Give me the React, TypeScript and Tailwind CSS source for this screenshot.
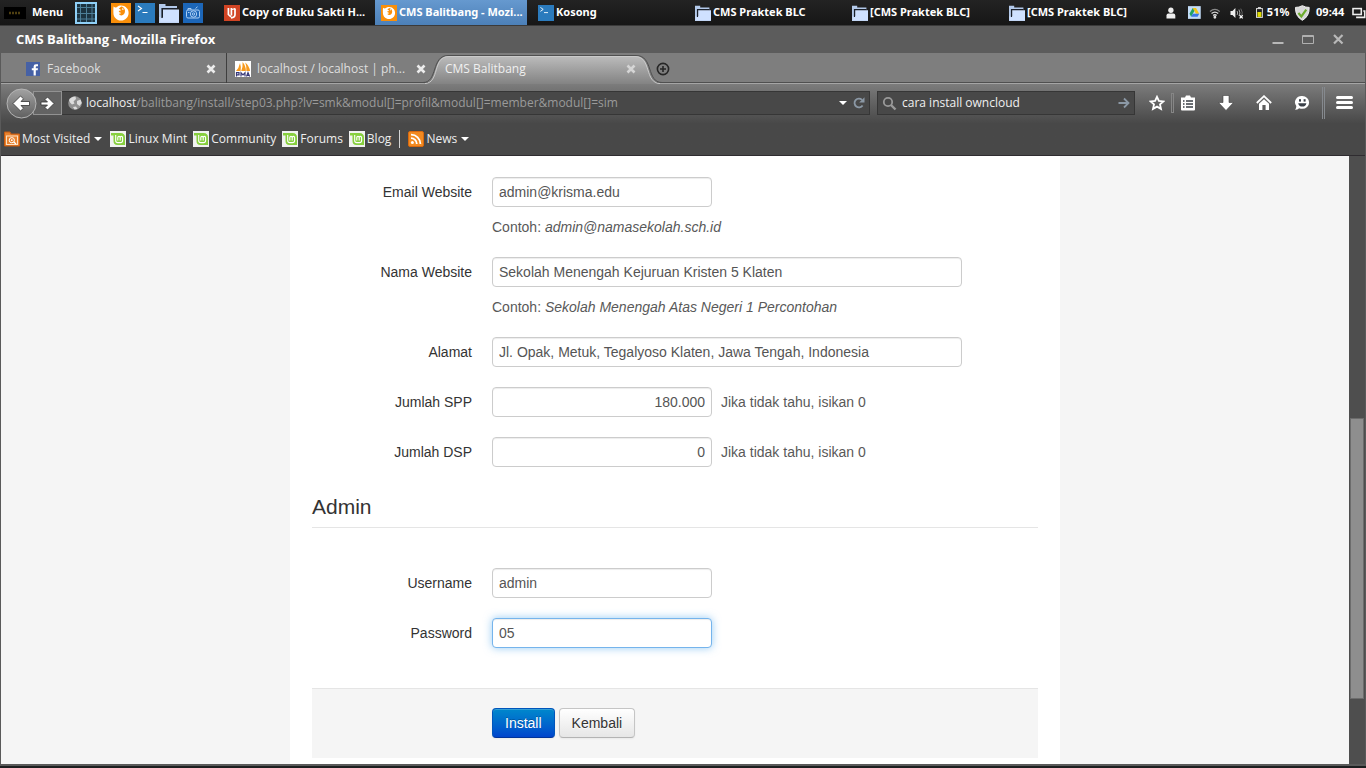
import { useState } from 'react'
import type { ReactNode } from 'react'

/* ---------- small icons ---------- */

function FirefoxIcon({ className }: { className: string }) {
  return (
    <svg className={className} viewBox="0 0 20 20">
      <rect width="20" height="20" fill="#f98f0a" />
      <path d="M2.6 3.4 C3.6 4.4 4.6 4.6 5.6 4.2 C7 2.8 8.6 2.4 10 2.4 C13 2.6 14.6 3.4 15.6 5 C16.6 5.6 17.6 7.6 17.6 10 C17.6 14.2 14.2 17.6 10 17.6 C5.8 17.6 2.4 14.2 2.4 10 C2.4 7.4 2.2 5.4 2.6 3.4 Z" fill="#fff" />
      <path d="M10.4 3.6 C12.6 4.2 13.8 5.6 14 7.8 C14.2 10.6 12.4 12.6 10 12.4 C8.6 12.2 8.2 11.4 8 10.8 C9 11 9.6 10.6 10.2 10 L8.4 9.2 C7.6 8.8 7.6 8 8.4 7.8 L10 7.4 C9.6 6.4 8.8 6 7.8 6 C8.6 5 9.4 4.2 10.4 3.6 Z" fill="#f98f0a" />
      <path d="M10.8 6.4 L12 4.6 L12.6 7 Z" fill="#fff" />
    </svg>
  )
}

function TerminalIcon({ className }: { className: string }) {
  return (
    <svg className={className} viewBox="0 0 20 20" fill="none">
      <rect width="20" height="20" fill="#2b7bbd" />
      <path d="M3 3 L6.5 5.5 L3 8 M7.5 9.5 H12.5" stroke="#fff" strokeWidth="1.1" />
    </svg>
  )
}

function FolderIcon({ className }: { className: string }) {
  return (
    <svg className={className} viewBox="0 0 20 20">
      <path d="M0 1 H6.5 V3 H18 V6 H3 V20 H0 Z" fill="#b3c9ea" />
      <path d="M0 14 H20 V20 H0 Z" fill="#c2d6f5" />
      <path d="M2.4 5 H18 V6.4 H3.8 V15 H2.4 Z" fill="#1a202a" />
      <path d="M4 6.6 H20 V18.8 H1.2 V15.4 H4 Z" fill="#cfe1ff" />
    </svg>
  )
}

function CameraIcon() {
  return (
    <svg className="size-5" viewBox="0 0 20 20" fill="none" stroke="#a9cdf3">
      <rect width="20" height="20" fill="#1c66b8" stroke="none" />
      <rect x="3.5" y="7" width="13" height="8" rx="1.5" />
      <circle cx="10.5" cy="11" r="3.2" />
      <circle cx="10.5" cy="11" r="1.2" />
      <path d="M5 7 V5.5 H8 V7 M12.5 5.5 L14.5 3.8 M5 9.5 H6.5" />
    </svg>
  )
}

function WorkspaceIcon() {
  return (
    <svg className="size-[22px]" viewBox="0 0 22 22">
      <rect width="22" height="22" fill="#8fd0f7" />
      <rect x="2" y="2" width="18" height="18" fill="#1c3340" />
      <path d="M5.5 2 V20 M11.5 2 V20 M17 2 V20 M2 5.5 H20 M2 11.5 H20 M2 17 H20" stroke="#4d7f98" />
    </svg>
  )
}

function PdfIcon() {
  return (
    <svg className="size-4" viewBox="0 0 16 16" fill="none">
      <rect width="16" height="16" fill="#d14424" />
      <path d="M4.4 3 V9.5 L7 12 M7.4 3 V10.5 M11 3.5 V9.5 Q11 12.5 7 12.8" stroke="#fff" strokeWidth="1.7" />
      <path d="M8 4.5 L11 3.6" stroke="#fff" strokeWidth="1.2" />
    </svg>
  )
}

function MintIcon() {
  return (
    <svg className="size-4" viewBox="0 0 16 16" fill="none">
      <rect width="16" height="16" fill="#f1f1f1" />
      <path d="M1 2 H10.5 Q15 2 15 6.5 V14 H7.5 Q3.5 14 3.5 10 V4.5 H1 Z" fill="#87cf3e" />
      <path d="M5.7 4 V9.5 Q5.7 11.6 7.8 11.6 H10.5 Q12.6 11.6 12.6 9.5 V6.5 Q12.6 5.4 11.4 5.4 Q10.2 5.4 10.2 6.5 V9.5 M10.2 6.5 Q10.2 5.4 9 5.4 Q7.8 5.4 7.8 6.5 V9.5" stroke="#fff" strokeWidth="1.1" />
    </svg>
  )
}

function MostVisitedIcon() {
  return (
    <svg className="size-4" viewBox="0 0 16 16" fill="none">
      <path d="M0.5 1 H6 L7 3 H15.5 V15 H0.5 Z" fill="#e8822e" stroke="#c65a10" />
      <rect x="2.5" y="5" width="11" height="8.5" stroke="#fbe0c4" />
      <circle cx="7.8" cy="9.2" r="2.6" stroke="#fff" />
      <circle cx="7.8" cy="9.2" r="0.9" fill="#fff" />
      <path d="M9.8 11 L12 13" stroke="#fff" strokeWidth="1.3" />
    </svg>
  )
}

function RssIcon() {
  return (
    <svg className="size-4" viewBox="0 0 16 16" fill="none">
      <rect x="0.5" y="0.5" width="15" height="15" rx="1.5" fill="#f28a21" stroke="#d9690f" />
      <circle cx="4.4" cy="11.6" r="1.5" fill="#fff" />
      <path d="M3 7.2 A5.8 5.8 0 0 1 8.8 13 M3 3.6 A9.4 9.4 0 0 1 12.4 13" stroke="#fff" strokeWidth="1.8" />
    </svg>
  )
}

function FacebookIcon() {
  return (
    <svg className="size-[14px]" viewBox="0 0 14 14">
      <rect width="14" height="14" fill="#4661a5" />
      <path d="M7.6 13.4 V8.2 H5.8 V6.2 H7.6 V4.6 Q7.6 2.2 10 2.2 H12 V4.2 H10.6 Q9.8 4.2 9.8 5 V6.2 H12 L11.7 8.2 H9.8 V13.4 Z" fill="#fff" />
    </svg>
  )
}

function PmaIcon() {
  return (
    <svg className="size-4" viewBox="0 0 16 16">
      <rect width="16" height="16" fill="#fff" />
      <path d="M1 10 Q4 7 5 2 Q6.2 5 5.6 10 Z M6.2 10 Q8 6 7.6 1 Q11 5 10.8 10 Z M11.4 10 Q11.8 5 10.2 1.5 Q14.4 5 15 10 Z" fill="#f79a1e" />
      <path d="M1.5 15.5 V11.6 H4 V13.8 H1.5 M6 15.5 V11.8 L8 13.8 L10 11.8 V15.5 M11.5 15.5 L13 11.6 L14.6 15.5 M12 14.3 H14" fill="none" stroke="#383878" strokeWidth="1.2" />
    </svg>
  )
}

function CloseIcon({ color }: { color: string }) {
  return (
    <svg className="size-[10px]" viewBox="0 0 10 10" stroke={color} strokeWidth="2.6">
      <path d="M1.5 1.5 L8.5 8.5 M8.5 1.5 L1.5 8.5" />
    </svg>
  )
}

function Caret() {
  return (
    <svg className="h-1 w-2" viewBox="0 0 8 4">
      <path d="M0 0 H8 L4 4 Z" fill="#fff" />
    </svg>
  )
}

/* ---------- desktop panel ---------- */

const taskWindows = [
  { title: 'Copy of Buku Sakti H...', icon: <PdfIcon />, active: false },
  { title: 'CMS Balitbang - Mozi...', icon: <FirefoxIcon className="size-4" />, active: true },
  { title: 'Kosong', icon: <TerminalIcon className="size-4" />, active: false },
  { title: 'CMS Praktek BLC', icon: <FolderIcon className="size-4" />, active: false },
  { title: '[CMS Praktek BLC]', icon: <FolderIcon className="size-4" />, active: false },
  { title: '[CMS Praktek BLC]', icon: <FolderIcon className="size-4" />, active: false },
]

function Panel() {
  return (
    <header className="flex h-[26px] shrink-0 items-center border-b border-[#3a3a3a] bg-linear-to-b from-[#232323] to-[#161616] font-['Noto_Sans',sans-serif] text-[11px] font-bold text-white">
      <div className="flex w-[218px] shrink-0 items-center pl-1">
        <button className="flex items-center gap-1.5">
          <svg className="h-3 w-[22px]" viewBox="0 0 22 12">
            <rect width="22" height="12" fill="#000" />
            <path d="M5 6 H17" stroke="#4f4012" strokeWidth="2.5" strokeDasharray="2 1" />
          </svg>
          Menu
        </button>
        <button className="ml-3" aria-label="Workspaces"><WorkspaceIcon /></button>
        <div className="ml-3.5 flex gap-1">
          <button aria-label="Firefox"><FirefoxIcon className="size-5" /></button>
          <button aria-label="Terminal"><TerminalIcon className="size-5" /></button>
          <button aria-label="Files"><FolderIcon className="size-5" /></button>
          <button aria-label="Screenshot"><CameraIcon /></button>
        </div>
      </div>

      <div className="flex h-full min-w-0 flex-1 gap-[5px]">
        {taskWindows.map((w, i) => (
          <button
            key={i}
            className={`flex h-full min-w-0 flex-1 items-center gap-0.5 pl-1.5 whitespace-nowrap ${w.active ? 'bg-linear-to-b from-[#6699cf] to-[#4c80b8]' : ''}`}
          >
            <span className="shrink-0">{w.icon}</span>
            <span className="overflow-hidden">{w.title}</span>
          </button>
        ))}
      </div>

      <div className="flex w-[211px] shrink-0 items-center pl-[11px]">
        <svg className="h-3 w-[10px]" viewBox="0 0 10 12" fill="#eee">
          <circle cx="5" cy="3.2" r="2.7" />
          <path d="M0.5 11.5 V8.5 Q0.5 6.6 2.5 6.6 H7.5 Q9.5 6.6 9.5 8.5 V11.5 Z" />
        </svg>
        <svg className="ml-3 size-[13px]" viewBox="0 0 13 13">
          <rect width="13" height="13" fill="#c3dcf7" />
          <path d="M4.8 2 H8.2 L11.5 7.8 H8.1 Z" fill="#f5c518" />
          <path d="M4.8 2 L6.5 5 L3.2 10.8 L1.5 7.8 Z" fill="#1fa463" />
          <path d="M4.9 7.8 H11.5 L9.8 10.8 H3.2 Z" fill="#3b78e7" />
        </svg>
        <svg className="ml-2 size-3" viewBox="0 0 12 12" fill="none" stroke="#ddd" strokeWidth="1.3">
          <path d="M1 4.5 Q6 0.2 11 4.5" stroke="#888" />
          <path d="M2.6 6.6 Q6 3.6 9.4 6.6" />
          <path d="M4.2 8.6 Q6 7 7.8 8.6" />
          <circle cx="6" cy="10.3" r="0.8" fill="#ddd" />
        </svg>
        <svg className="ml-2.5 h-3 w-[14px]" viewBox="0 0 14 12" fill="none">
          <path d="M0.5 4 H2.5 L5.5 1 V11 L2.5 8 H0.5 Z" fill="#eee" />
          <path d="M7.3 4 Q8.3 6 7.3 8 M9.2 2.5 Q11 6 9.2 9" stroke="#aaa" />
          <path d="M11 1.5 Q13.5 6 12 8" stroke="#666" />
          <path d="M9.8 8.3 L13 11.5 M13 8.3 L9.8 11.5" stroke="#fff" strokeWidth="1.3" />
        </svg>
        <svg className="ml-3 h-[11px] w-[7px]" viewBox="0 0 7 11">
          <rect x="2" width="3" height="2" fill="#ddd" />
          <rect x="0.5" y="1.5" width="6" height="9" fill="#222" stroke="#ddd" />
          <rect x="1.5" y="5" width="4" height="5" fill="#e0dc00" />
        </svg>
        <span className="ml-1">51%</span>
        <svg className="ml-1.5 h-4 w-[15px]" viewBox="0 0 15 16">
          <path d="M7.5 0.5 Q11 2.5 14.5 2.3 Q14.8 11.5 7.5 15.5 Q0.2 11.5 0.5 2.3 Q4 2.5 7.5 0.5 Z" fill="#d8d8d8" stroke="#f2f2f2" />
          <path d="M3.5 8 L6.5 11.5 L11.5 4.5" fill="none" stroke="#6cab2c" strokeWidth="2.2" />
        </svg>
        <time className="ml-1.5">09:44</time>
        <svg className="ml-2 h-3 w-[14px]" viewBox="0 0 14 12" fill="none" stroke="#eee" strokeWidth="1.6">
          <rect x="1" y="1.5" width="8.5" height="6" />
          <path d="M11.5 4 H13 V10.5 H5 V9.5" />
        </svg>
      </div>
    </header>
  )
}

/* ---------- browser chrome ---------- */

function TitleBar() {
  return (
    <div className="flex h-[27px] shrink-0 items-center justify-between bg-[#5c5c5c] pr-[22px] pl-4">
      <h1 className="font-['Open_Sans',sans-serif] text-[13px] font-bold text-white">CMS Balitbang - Mozilla Firefox</h1>
      <div className="flex items-center gap-[18px]">
        <button aria-label="Minimize">
          <svg className="size-3" viewBox="0 0 12 12"><path d="M0.5 9 H11.5" stroke="#b8b8b8" strokeWidth="2" /></svg>
        </button>
        <button aria-label="Maximize">
          <svg className="size-3" viewBox="0 0 12 12"><path d="M0.5 1.5 H11.5 V9.5 H0.5 Z M0.5 2.5 H11.5" stroke="#b0b0b0" fill="none" /></svg>
        </button>
        <button aria-label="Close">
          <svg className="size-3" viewBox="0 0 12 12"><path d="M2 1 L10.5 9.5 M10.5 1 L2 9.5" stroke="#b8b8b8" strokeWidth="2.2" /></svg>
        </button>
      </div>
    </div>
  )
}

function TabBar() {
  return (
    <div className="flex h-[31px] shrink-0 border-b border-[#a5a5a5] bg-[#7e7e7e] text-[12px] text-[#dedede] shadow-[inset_0_-1px_0_#505050]">
      <div className="flex w-[226px] items-center border-r border-[#3f3f3f] pt-px pr-2.5 pl-[25px]">
        <FacebookIcon />
        <span className="ml-[7px] flex-1">Facebook</span>
        <button aria-label="Close tab"><CloseIcon color="#ececec" /></button>
      </div>
      <div className="flex w-[208px] items-center pt-px pr-[9px] pl-2">
        <PmaIcon />
        <span className="ml-1.5 flex-1 whitespace-nowrap">localhost / localhost | ph...</span>
        <button aria-label="Close tab"><CloseIcon color="#ececec" /></button>
      </div>
      <div className="relative flex w-[212px] items-center pt-px pr-[11px] pl-2.5">
        <svg className="absolute top-px -left-3 h-[30px] w-[240px]" viewBox="0 0 240 30" fill="none">
          <defs>
            <linearGradient id="tab" x1="0" y1="0" x2="0" y2="1">
              <stop offset="0" stopColor="#bcbcbc" />
              <stop offset="1" stopColor="#838383" />
            </linearGradient>
          </defs>
          <path d="M0 30 C17 30 8 2 26 2 H212 C230 2 221 30 238 30 Z" fill="url(#tab)" />
          <path d="M0 28.5 C15 28.5 8 1.5 25 1.5 H213 C231 1.5 223 28.5 239 28.5" stroke="#505050" />
          <path d="M2 29.5 C17 29 9 2.5 26 2.5 H212 C229 2.5 221 29 237 29.5" stroke="#cacaca" />
        </svg>
        <span className="relative flex-1 text-[#f0f0f0]">CMS Balitbang</span>
        <button className="relative" aria-label="Close tab"><CloseIcon color="#d5d5d5" /></button>
      </div>
      <button className="ml-[9px] pt-px" aria-label="New tab">
        <svg className="size-[14px]" viewBox="0 0 14 14" fill="none" stroke="#262626" strokeWidth="1.6">
          <circle cx="7" cy="7" r="5.6" />
          <path d="M7 4 V10 M4 7 H10" />
        </svg>
      </button>
    </div>
  )
}

function NavBar() {
  const [url, setUrl] = useState('localhost/balitbang/install/step03.php?lv=smk&modul[]=profil&modul[]=member&modul[]=sim')
  const [query, setQuery] = useState('cara install owncloud')
  const slash = url.indexOf('/')

  return (
    <div className="flex h-[38px] shrink-0 items-center pr-3 pl-[5px]">
      <button aria-label="Back" className="relative z-10 shrink-0">
        <svg className="size-[31px]" viewBox="0 0 31 31">
          <defs>
            <linearGradient id="back" x1="0" y1="0" x2="0" y2="1">
              <stop offset="0" stopColor="#a2a2a2" />
              <stop offset="1" stopColor="#606060" />
            </linearGradient>
          </defs>
          <circle cx="15.5" cy="15.5" r="14.5" fill="url(#back)" stroke="#b4b4b4" />
          <path d="M7 15.5 L14.5 8 L17.5 10.8 L15 13.5 H23.5 V17.5 H15 L17.5 20.2 L14.5 23 Z" fill="#fff" stroke="#333" strokeWidth="0.8" />
        </svg>
      </button>
      <button aria-label="Forward" className="-ml-1 flex h-6 w-[29px] shrink-0 items-center justify-center border border-[#929292] bg-[#636363]">
        <svg className="h-[15px] w-[15px]" viewBox="0 0 15 15">
          <path d="M14 7.5 L7.5 1 L5 3.5 L7.5 6 H1 V9 H7.5 L5 11.5 L7.5 14 Z" fill="#fff" stroke="#333" strokeWidth="0.8" />
        </svg>
      </button>
      <div className="flex h-6 flex-1 items-center border border-l-0 border-[#363636] bg-[#484848] pr-1 pl-1.5">
        <svg className="size-[14px] shrink-0" viewBox="0 0 14 14">
          <circle cx="7" cy="7" r="6.8" fill="#909090" />
          <path d="M1 4 Q3 0.5 7.5 0.5 L8 3 L5.5 5.5 L6.5 7.5 L4 8.5 L2 6.5 Z M9 5 L12.5 3.5 L13.8 7 L11.5 10 L9 8 Z M5 11 L8 10.5 L9.5 13 L6.5 13.6 Z" fill="#dcdcdc" />
        </svg>
        {/* the input sits over a coloured copy of the address so the host can be brighter */}
        <div className="relative ml-1 flex-1 text-[12px] leading-5">
          <div aria-hidden="true" className="whitespace-pre text-[#9a9a9a]">
            <span className="text-[#eeeeee]">{url.slice(0, slash)}</span>{url.slice(slash)}
          </div>
          <input
            aria-label="Address"
            className="absolute inset-0 w-full bg-transparent text-transparent caret-white outline-none"
            value={url}
            onChange={(e) => setUrl(e.target.value)}
          />
        </div>
        <Caret />
        <button className="ml-1.5" aria-label="Reload">
          <svg className="size-3" viewBox="0 0 12 12" fill="none">
            <path d="M9.6 8.4 A4.4 4.4 0 1 1 9 2.8" stroke="#8b98a5" strokeWidth="1.8" />
            <path d="M11.5 0.2 V5.5 H6.2 Z" fill="#8b98a5" />
          </svg>
        </button>
      </div>
      <label className="ml-[7px] flex h-6 w-[258px] shrink-0 items-center border border-[#363636] bg-[#484848] px-1">
        <svg className="size-[15px] shrink-0" viewBox="0 0 15 15" fill="none" stroke="#9a9a9a">
          <circle cx="6" cy="6" r="4.2" strokeWidth="1.8" />
          <path d="M9 9 L13.5 13.5" strokeWidth="2.4" />
        </svg>
        <input
          aria-label="Search"
          className="ml-[5px] min-w-0 flex-1 bg-transparent text-[12px] text-[#f0f0f0] outline-none"
          value={query}
          onChange={(e) => setQuery(e.target.value)}
        />
        <svg className="size-3" viewBox="0 0 12 12" fill="none" stroke="#8b98a5" strokeWidth="1.8">
          <path d="M0.5 6 H10 M6 1.5 L10.5 6 L6 10.5" />
        </svg>
      </label>

      <div className="flex shrink-0 items-center">
        <button className="ml-3.5" aria-label="Bookmark">
          <svg className="size-4" viewBox="0 0 16 16" fill="none" stroke="#fff" strokeWidth="1.8">
            <path d="M8 1.8 L9.9 5.9 L14.4 6.4 L11 9.4 L12 13.9 L8 11.6 L4 13.9 L5 9.4 L1.6 6.4 L6.1 5.9 Z" />
          </svg>
        </button>
        <span className="ml-1.5 h-5 w-[3px] border border-[#868686]"></span>
        <button className="ml-1.5" aria-label="Bookmarks list">
          <svg className="size-4" viewBox="0 0 16 16">
            <path d="M1 2.5 H5 L6 0.5 H10 L11 2.5 H15 V14.5 Q15 15.5 14 15.5 H2 Q1 15.5 1 14.5 Z" fill="#fff" />
            <path d="M3 6 H4.5 M6 6 H13 M3 9 H4.5 M6 9 H13 M3 12 H4.5 M6 12 H13" stroke="#3a3f45" strokeWidth="1.6" />
          </svg>
        </button>
        <button className="ml-[22px]" aria-label="Downloads">
          <svg className="size-4" viewBox="0 0 16 16">
            <path d="M5 0.5 H11 V7.5 H15.5 L8 15.5 L0.5 7.5 H5 Z" fill="#fff" stroke="#3f3f3f" strokeWidth="0.6" />
          </svg>
        </button>
        <button className="ml-[22px]" aria-label="Home">
          <svg className="size-4" viewBox="0 0 16 16">
            <path d="M0.8 8 L8 1.2 L15.2 8" fill="none" stroke="#fff" strokeWidth="1.8" />
            <path d="M3 8.8 L8 4.2 L13 8.8 V15 H9.6 V10 H6.4 V15 H3 Z" fill="#fff" />
          </svg>
        </button>
        <button className="ml-[22px]" aria-label="Chat">
          <svg className="size-4" viewBox="0 0 16 16">
            <path d="M8.3 1 A6.7 6.3 0 0 1 8.3 13.8 Q6.6 13.8 5.2 13.2 Q3.5 14.8 1 14.8 Q2.4 13.4 2.3 11 A6.7 6.3 0 0 1 8.3 1 Z" fill="#fff" />
            <rect x="5" y="4.2" width="2" height="2.4" fill="#3a4048" />
            <rect x="9.6" y="4.2" width="2" height="2.4" fill="#3a4048" />
            <path d="M4.2 8.2 H12.4 Q11.8 11.6 8.3 11.6 Q4.8 11.6 4.2 8.2 Z" fill="#3a4048" />
          </svg>
        </button>
        <span className="ml-3 h-8 w-[3px] border-x border-[#85898e]"></span>
        <button className="ml-[11px]" aria-label="Menu">
          <svg className="h-4 w-[17px]" viewBox="0 0 17 16">
            <path d="M1.5 2.5 H15.5 M1.5 7.5 H15.5 M1.5 12.5 H15.5" stroke="#fff" strokeWidth="3" strokeLinecap="round" />
          </svg>
        </button>
      </div>
    </div>
  )
}

function Bookmark({ icon, label, caret }: { icon: ReactNode; label: string; caret?: boolean }) {
  return (
    <a href="#" className="flex items-center gap-0.5">
      {icon}
      <span>{label}</span>
      {caret && <span className="mx-0.5 flex"><Caret /></span>}
    </a>
  )
}

function BookmarkBar() {
  return (
    <nav className="flex h-[34px] shrink-0 items-center gap-1.5 border-b border-[#2f2c30] pt-px pl-[3px] text-[12px] whitespace-nowrap text-[#eeeeee]">
      <Bookmark icon={<MostVisitedIcon />} label="Most Visited" caret />
      <Bookmark icon={<MintIcon />} label="Linux Mint" />
      <Bookmark icon={<MintIcon />} label="Community" />
      <Bookmark icon={<MintIcon />} label="Forums" />
      <Bookmark icon={<MintIcon />} label="Blog" />
      <span className="mx-0.5 h-[18px] w-px bg-[#d5d5d5]"></span>
      <Bookmark icon={<RssIcon />} label="News" caret />
    </nav>
  )
}

/* ---------- web page ---------- */

type FieldProps = {
  id: string
  label: string
  value: string
  wide?: boolean
  right?: boolean
  focused?: boolean
  inline?: string
  example?: string
}

function Field({ id, label, value, wide, right, focused, inline, example }: FieldProps) {
  const [text, setText] = useState(value)

  return (
    <div className="mb-5 flex gap-5">
      <label htmlFor={id} className="w-40 shrink-0 pt-[5px] text-right text-[#333333]">{label}</label>
      <div className="min-w-0 flex-1 text-[#595959]">
        <div className="flex items-center gap-[9px]">
          <input
            id={id}
            type="text"
            value={text}
            onChange={(e) => setText(e.target.value)}
            className={`h-[30px] rounded border bg-white px-1.5 text-[#555555] outline-none ${wide ? 'w-[470px]' : 'w-[220px]'} ${right ? 'text-right' : ''} ${focused ? 'border-[#75b4ec] shadow-[inset_0_1px_1px_rgba(0,0,0,0.075),0_0_8px_rgba(82,168,236,0.6)]' : 'border-[#cccccc] shadow-[inset_0_1px_1px_rgba(0,0,0,0.075)]'}`}
          />
          {inline && <span>{inline}</span>}
        </div>
        {example && <p className="mt-2.5">Contoh: <em>{example}</em></p>}
      </div>
    </div>
  )
}

function InstallForm() {
  return (
    <form
      className="mx-auto min-h-full w-[770px] max-w-full bg-white px-[22px] pt-[21px] font-['Liberation_Sans',Arial,sans-serif] text-[14px] leading-5"
      onSubmit={(e) => e.preventDefault()}
    >
      <Field id="email" label="Email Website" value="admin@krisma.edu" example="admin@namasekolah.sch.id" />
      <Field id="nama" label="Nama Website" value="Sekolah Menengah Kejuruan Kristen 5 Klaten" example="Sekolah Menengah Atas Negeri 1 Percontohan" wide />
      <Field id="alamat" label="Alamat" value="Jl. Opak, Metuk, Tegalyoso Klaten, Jawa Tengah, Indonesia" wide />
      <Field id="spp" label="Jumlah SPP" value="180.000" inline="Jika tidak tahu, isikan 0" right />
      <Field id="dsp" label="Jumlah DSP" value="0" inline="Jika tidak tahu, isikan 0" right />

      <h2 className="mb-10 border-b border-[#e5e5e5] text-[21px] leading-10 text-[#333333]">Admin</h2>

      <Field id="username" label="Username" value="admin" />
      <Field id="password" label="Password" value="05" focused />

      <div className="mt-10 flex gap-1 border-t border-[#e5e5e5] bg-[#f5f5f5] pt-[19px] pb-5 pl-[180px]">
        <button type="submit" className="h-[30px] rounded border border-[#0055bb] border-b-[#003399] bg-linear-to-b from-[#0088cc] to-[#0044cc] px-3 text-white shadow-[inset_0_1px_0_rgba(255,255,255,0.2),0_1px_2px_rgba(0,0,0,0.05)] text-shadow-[0_-1px_0_rgba(0,0,0,0.25)]">
          Install
        </button>
        <button type="button" className="h-[30px] rounded border border-[#c5c5c5] border-b-[#b3b3b3] bg-linear-to-b from-white to-[#e6e6e6] px-3 text-[#333333] shadow-[inset_0_1px_0_rgba(255,255,255,0.2),0_1px_2px_rgba(0,0,0,0.05)] text-shadow-[0_1px_1px_rgba(255,255,255,0.75)]">
          Kembali
        </button>
      </div>
    </form>
  )
}

export default function App() {
  return (
    <div className="flex h-screen flex-col overflow-hidden bg-[#1d1f20] font-['Open_Sans','Noto_Sans',sans-serif]">
      <Panel />
      <TitleBar />
      <div className="mb-[2px] flex min-h-0 flex-1 flex-col border-x border-b-2 border-[#5a5a5a]">
        <TabBar />
        <div className="shrink-0 bg-[#484848] bg-linear-to-b from-[#7c7c7c] to-[#484848] to-55%">
          <NavBar />
          <BookmarkBar />
        </div>
        <div className="flex min-h-0 flex-1">
          <main className="min-w-0 flex-1 overflow-hidden bg-[#f5f5f5]">
            <InstallForm />
          </main>
          {/* scrollbar, thumb placed by ratio */}
          <div className="flex w-4 shrink-0 flex-col bg-[#4e4e4e] pr-px pl-px" aria-hidden="true">
            <div className="grow-[263]"></div>
            <div className="grow-[280] border border-[#6c6c6c] bg-[#8e8e8e]"></div>
            <div className="grow-[65]"></div>
          </div>
        </div>
      </div>
    </div>
  )
}
